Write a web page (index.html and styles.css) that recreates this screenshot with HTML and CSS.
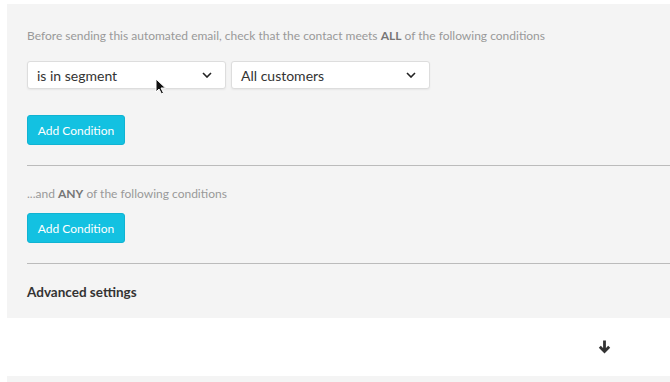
FILE: index.html
```html
<!DOCTYPE html>
<html lang="en">
<head>
    <meta charset="UTF-8">
    <meta name="viewport" content="width=device-width, initial-scale=1.0">
    <title>Email conditions</title>
    <link rel="stylesheet" href="styles.css">
</head>
<body>
    <div class="panel">
        <p class="hint">Before sending this automated email, check that the contact meets <b>ALL</b> of the following conditions</p>

        <div class="selects">
            <div class="select">
                <span>is in segment</span>
                <svg class="chevron" width="10" height="6" viewBox="0 0 10 6"><path d="M1 1l4 4 4-4" fill="none" stroke="#222" stroke-width="1.6"/></svg>
            </div>
            <div class="select">
                <span>All customers</span>
                <svg class="chevron" width="10" height="6" viewBox="0 0 10 6"><path d="M1 1l4 4 4-4" fill="none" stroke="#222" stroke-width="1.6"/></svg>
            </div>
            <!-- mouse pointer from the recording -->
            <svg class="pointer" width="12" height="17" viewBox="0 0 12 17"><path d="M1 1v13l3-3 2.5 5 2-1-2.5-5h4.5z" fill="#111" stroke="#fff" stroke-width="1"/></svg>
        </div>

        <button class="btn">Add Condition</button>

        <hr class="divider">

        <p class="hint">...and <b>ANY</b> of the following conditions</p>
        <button class="btn">Add Condition</button>

        <hr class="divider">

        <h4 class="advanced">Advanced settings</h4>
    </div>

    <div class="arrow-row">
        <svg width="13" height="14" viewBox="0 0 13 14"><path d="M6.5 0.5v11M1.8 6.8l4.7 4.7 4.7-4.7" fill="none" stroke="#333" stroke-width="2.8"/></svg>
    </div>

    <div class="panel next"></div>
</body>
</html>
```

FILE: styles.css
```css
* {
    margin: 0;
    padding: 0;
    box-sizing: border-box;
}

body {
    font-family: 'Lato', 'Open Sans', sans-serif;
    background: white;
    padding: 4px 0 0 7px;
    overflow: hidden;
}

.panel {
    background: #f4f4f4;
    padding: 24px 0 0 20px;
    height: 314px;
}

.hint {
    font-size: 12px;
    color: #999;
    line-height: 16px;
}

.hint b {
    color: #777;
}

.selects {
    position: relative;
    display: flex;
    gap: 5px;
    margin-top: 17px;
}

.select {
    width: 199px;
    height: 28px;
    background: white;
    border: 1px solid #ddd;
    border-radius: 3px;
    box-shadow: 0 1px 2px rgba(0, 0, 0, 0.06);
    display: flex;
    align-items: center;
    justify-content: space-between;
    padding: 0 13px 0 9px;
    font-size: 14px;
    color: #333;
}

.pointer {
    position: absolute;
    left: 128px;
    top: 17px;
}

.btn {
    display: block;
    margin-top: 26px;
    width: 98px;
    height: 30px;
    background: #13c1e1;
    color: white;
    border: 1px solid #10b3d2;
    border-radius: 3px;
    font-family: inherit;
    font-size: 12px;
}

.divider {
    border: none;
    border-top: 1px solid #bbb;
    margin: 20px 0 20px;
}

.hint + .btn {
    margin-top: 11px;
}

.advanced {
    font-size: 13.5px;
    font-weight: bold;
    color: #333;
    margin-top: 18px;
}

.arrow-row {
    height: 58px;
    display: flex;
    align-items: center;
    padding-left: 591px;
}

.next {
    height: 20px;
    padding: 0;
}
```
